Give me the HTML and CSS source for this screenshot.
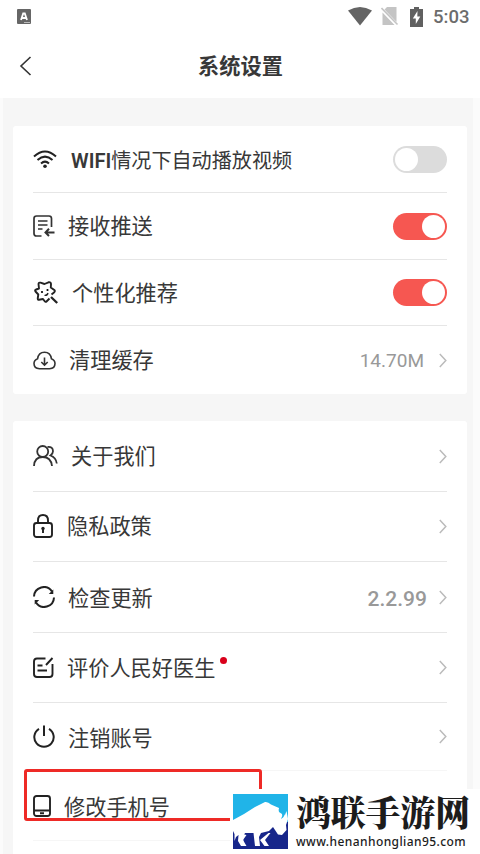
FILE: index.html
```html
<!DOCTYPE html>
<html lang="zh-CN">
<head>
<meta charset="utf-8">
<title>系统设置</title>
<link rel="stylesheet" href="styles.css">
</head>
<body>
<div class="screen">
  <div class="status">
    <svg class="app" width="14" height="15" viewBox="0 0 14 15"><rect width="14" height="15" rx="1" fill="#666"/><path d="M4 11 6.2 4.5h1.6L10 11M5 9h4" fill="none" stroke="#fff" stroke-width="1.8"/><path d="M7 13.5h6" stroke="#bbb"/></svg>
    <svg width="24" height="19" viewBox="0 0 24 19"><path d="M0 3.5Q12-3.500 24 3.500L12 18.500Z" fill="#646464"/></svg>
    <svg class="sim" width="18" height="19" viewBox="0 0 18 19"><path d="M6 0h9.500v15L3.500 2.500ZM1.500 5.500 13.500 18h-12Z" fill="#c4c4c4"/><path d="m.5 1 16 16.500" stroke="#c4c4c4" stroke-width="1.600"/></svg>
    <svg class="battery" width="13" height="20" viewBox="0 0 13 20"><path d="M4 0h5v2h4v18H0V2h4Z" fill="#606060"/><path d="M7.500 4 2.800 11.500h3V17L10.300 9.500h-3Z" fill="#fff"/></svg>
    <span class="time">5:03</span>
  </div>
  <header class="header">
    <svg class="back" width="13" height="20" viewBox="0 0 13 20"><path d="M11.500 1 2 10l9.500 9" fill="none" stroke="#333" stroke-width="1.600"/></svg>
    <h1 class="title">系统设置</h1>
  </header>
  <main class="content">
    <section class="card">
      <div class="row h67">
        <span class="slot s38"><svg width="24" height="19" viewBox="0 0 24 19"><g fill="none" stroke="#222" stroke-width="2"><path d="M1 6.500Q12-3.500 23 6.500M4.500 10Q12 3.200 19.500 10M8 13.400Q12 9.800 16 13.400"/></g><circle cx="12" cy="16.300" r="1.800" fill="#222"/></svg></span>
        <span class="label wifi"><b>WIFI</b>情况下自动播放视频</span>
        <span class="toggle"></span>
      </div>
      <div class="row h67">
        <span class="slot s35"><svg width="22" height="22" viewBox="0 0 22 22"><g fill="none" stroke="#333" stroke-width="1.700"><path d="M8.500 21H3.500Q1 21 1 18.500V3.500Q1 1 3.500 1H16Q18.500 1 18.500 3.500V12M5 6h9.500M5 10h9.500M5 14h4.500"/><path stroke-width="2" d="M12.500 17.500h9M16 13.800 12.500 17.500l3.500 3.500"/></g></svg></span>
        <span class="label">接收推送</span>
        <span class="toggle on"></span>
      </div>
      <div class="row h66">
        <span class="slot s39 star"><svg width="24" height="23" viewBox="0 0 24 23"><path d="M15.500 17.500 12.500 20.500Q11.500 21.500 10.500 20L9 18 5 18.800Q3.500 18.800 3.800 17L4.300 13.500 1.500 10.500Q.5 9 2.200 8.500L5 7.500 4.500 3Q4.700 1.200 6.500 1.700L10.500 3 14.500 1.300Q17 .8 17 3L16.800 6.500 20.300 9Q21.500 10.200 20 11.500L17.500 13.500" fill="none" stroke="#222" stroke-width="1.900" stroke-linejoin="round"/><path d="m17 16 6.200 6" stroke="#222" stroke-width="2.300"/><circle cx="8" cy="11" r="1.100"/><circle cx="13.500" cy="9" r="1.100"/><path d="M10.500 14.300q3 .2 3.500-2.300" fill="none" stroke="#222" stroke-width="1.300"/></svg></span>
        <span class="label">个性化推荐</span>
        <span class="toggle on"></span>
      </div>
      <div class="row last h68">
        <span class="slot s36"><svg width="23" height="19" viewBox="0 0 23 19"><g fill="none" stroke="#333" stroke-width="1.600"><path d="M6.500 17.800Q1 17.500 1 12.500 1 9 4.600 7.700 5.500 1.200 11.500 1.200t6.900 6.500Q22 9 22 12.500q0 5-5.500 5.300ZM11.500 6.500v7.500M8.300 11l3.200 3.200 3.200-3.200"/></g></svg></span>
        <span class="label">清理缓存</span>
        <span class="value">14.70M</span>
        <svg class="arrow" width="8" height="15" viewBox="0 0 8 15"><path d="m.8 1 6 6.500-6 6.500"/></svg>
      </div>
    </section>
    <section class="card second">
      <div class="row h71">
        <span class="slot s38"><svg width="25" height="22" viewBox="0 0 25 22"><g fill="none" stroke="#333" stroke-width="1.800"><circle cx="9.700" cy="6.500" r="5.500"/><path d="M1 21Q1.500 12 9.700 12T19 21M14.500 2Q20 1.500 20 6.200 20 8.500 17.500 10.500 23 12.500 23.800 18.500"/></g></svg></span>
        <span class="label">关于我们</span>
        <svg class="arrow" width="8" height="15" viewBox="0 0 8 15"><path d="m.8 1 6 6.500-6 6.500"/></svg>
      </div>
      <div class="row h70">
        <span class="slot s34 lock"><svg width="20" height="24" viewBox="0 0 20 24"><g fill="none" stroke="#222" stroke-width="1.900"><rect x="1" y="9" width="18" height="14" rx="2.500"/><path d="M5 9V6.500Q5 1 10 1t5 5.500V9M10 14v5"/></g><circle cx="10" cy="14.500" r="1.700" fill="#222"/></svg></span>
        <span class="label up">隐私政策</span>
        <svg class="arrow" width="8" height="15" viewBox="0 0 8 15"><path d="m.8 1 6 6.500-6 6.500"/></svg>
      </div>
      <div class="row h71">
        <span class="slot s35"><svg width="22" height="22" viewBox="0 0 22 22"><g fill="none" stroke="#222" stroke-width="2"><path d="M1 10.500A9.800 9.800 0 0 1 19 5.500M21 11.500A9.800 9.800 0 0 1 3 16.500"/></g><path d="M20.300 3.500v4.500h-4.500ZM1.700 18.500v-4.500h4.500Z" fill="#222"/></svg></span>
        <span class="label down">检查更新</span>
        <span class="value version">2.2.99</span>
        <svg class="arrow" width="8" height="15" viewBox="0 0 8 15"><path d="m.8 1 6 6.500-6 6.500"/></svg>
      </div>
      <div class="row h70">
        <span class="slot s34"><svg width="21" height="21" viewBox="0 0 21 21"><g fill="none" stroke="#222" stroke-width="1.900"><path d="M12.500 1.500H4Q1 1.500 1 4.500V17q0 3 3 3H16.500q3 0 3-3V7M4.500 8.500h5M4.500 13.500h9.500M19.500 1 13 8"/></g></svg></span>
        <span class="label">评价人民好医生</span><i class="dot"></i>
        <svg class="arrow" width="8" height="15" viewBox="0 0 8 15"><path d="m.8 1 6 6.500-6 6.500"/></svg>
      </div>
      <div class="row h68 faint">
        <span class="slot s35"><svg width="22" height="23" viewBox="0 0 22 23"><path d="M6 3.800A9.700 9.700 0 1 0 16 3.800M11 .5v10.500" fill="none" stroke="#222" stroke-width="2"/></svg></span>
        <span class="label down">注销账号</span>
        <svg class="arrow" width="8" height="15" viewBox="0 0 8 15"><path d="m.8 1 6 6.500-6 6.500"/></svg>
      </div>
      <div class="row h70 faint">
        <span class="slot s31"><svg width="18" height="22" viewBox="0 0 18 22"><g fill="none" stroke="#222" stroke-width="1.900"><rect x="1" y="1" width="16" height="20" rx="2.500"/><path d="M1 15.500h16M7 18.300h4"/></g></svg></span>
        <span class="label down">修改手机号</span>
      </div>
    </section>
  </main>
  <div class="highlight"></div>
  <div class="watermark">
    <svg class="logo" width="55" height="55" viewBox="0 0 55 55">
      <path fill="#20b4e8" d="M0 0h55v30H0Z"/>
      <path fill="#17268a" d="M0 28h55v27H0Z"/>
      <path fill="#fff" d="M0 26 11 20 22 13 32 8Q35 7.500 38 10.500L46 14 49 19 52 21 53.500 17 55 25 53 31 53.500 36 49 41 45 40.500 42 36 40 33 36 37 28 39 26 43 27 52H22L20.500 39H12L10 43 10.500 49 12 52H8L5 47 5.500 41 3 43 1.500 47V40L0 37Z"/>
      <path fill="#fff" d="m9.500 40-4 6 4 6h4l-3.500-6 3.500-5ZM35.500 39 27 46l4.500 6h4.500l-4-6 5.500-7Z"/>
      <path fill="#20b4e8" d="M49 11q-4.500 3-3 7l3 2q1 2-1 5 5-3 3-7l-3-2q-1-2 1-5Z"/>
    </svg>
    <div class="brand">
      <div class="name">鸿联手游网</div>
      <div class="url">www.henanhonglian95.com</div>
    </div>
  </div>
</div>
</body>
</html>
```

FILE: styles.css
```css
* { box-sizing: border-box; }
body { margin: 0; background: #fff; }
.screen {
  position: relative;
  width: 480px;
  height: 854px;
  overflow: hidden;
  font-family: Roboto, "Noto Sans CJK SC", sans-serif;
  color: #383838;
}
svg { display: block; flex: none; }
.status {
  display: flex;
  align-items: center;
  height: 33px;
  padding: 0 11px 0 17px;
}
.app { margin-right: auto; }
.sim { margin-left: 9px; }
.battery { margin-left: 11px; }
.time {
  width: 36px;
  margin-left: 10px;
  font-size: 18.500px;
  font-weight: 500;
  color: #6c6c6c;
  white-space: nowrap;
}
.header {
  display: flex;
  align-items: center;
  height: 65px;
  padding: 0 19px;
}
.title {
  flex: 1;
  margin: -1px 12px 0 0;
  text-align: center;
  font: 700 21.200px/30px "Noto Sans CJK SC", sans-serif;
}
.content {
  height: 756px;
  padding: 28px 10px 0;
  background: #f6f6f6;
  border: solid #fbfbfb;
  border-width: 0 7px 0 3px;
}
.card {
  width: 454px;
  padding: 0 20px;
  border-radius: 3px;
  background: #fff;
}
.second { margin-top: 27px; height: 440px; }
.row {
  display: flex;
  align-items: center;
  border-bottom: 1px solid #e6e6e6;
}
.last { border-bottom: 0; }
.faint { border-color: #f6f6f6; }
.h66 { height: 66px; }
.h67 { height: 67px; }
.h68 { height: 68px; }
.h70 { height: 70px; }
.h71 { height: 71px; }
.slot { flex: none; }
.s31 { width: 31px; }
.s34 { width: 34px; }
.s35 { width: 35px; }
.s36 { width: 36px; }
.s38 { width: 38px; }
.s39 { width: 39px; }
.star { padding-left: 1px; }
.lock { padding-bottom: 2px; }
.label {
  padding-top: 2px;
  font-size: 21.200px;
  line-height: 30px;
  white-space: nowrap;
}
.up { padding-top: 0; }
.down { padding-top: 4px; }
.wifi { padding-top: 3px; font-size: 20.100px; }
.wifi b { font-weight: 600; }
.toggle {
  width: 54px;
  height: 27px;
  margin-left: auto;
  padding: 2px;
  border-radius: 14px;
  background: #dcdcdc;
}
.toggle::before {
  content: "";
  display: block;
  width: 23px;
  height: 23px;
  border-radius: 50%;
  background: #fff;
}
.on { background: #f65751; }
.on::before { margin-left: 27px; }
.arrow {
  margin-left: auto;
  fill: none;
  stroke: #bbb;
  stroke-width: 1.500;
}
.value {
  margin-left: auto;
  padding-top: 1px;
  font-size: 19px;
  color: #999;
}
.value + .arrow { margin-left: 15px; }
.version { padding-top: 4px; font-size: 21px; font-weight: 500; }
.version + .arrow { margin-left: 12px; }
.dot {
  width: 7px;
  height: 7px;
  margin: -14px 0 0 5px;
  border-radius: 50%;
  background: #d9001b;
}
.highlight {
  position: absolute;
  left: 24px;
  top: 769px;
  width: 238px;
  height: 52px;
  border: 3px solid #ee2a26;
  border-radius: 3px;
}
.watermark {
  position: absolute;
  left: 230px;
  top: 789px;
  width: 250px;
  height: 65px;
  display: flex;
  padding: 5px 0 0 3px;
  background: #fff;
}
.brand { padding-left: 8px; color: #1c1c1c; }
.name {
  height: 41px;
  font: 900 34.800px/34px "Noto Serif CJK SC", "Noto Sans CJK SC", serif;
  white-space: nowrap;
}
.url {
  font: 500 12px/14px "Noto Sans", sans-serif;
  letter-spacing: .42px;
}
```
